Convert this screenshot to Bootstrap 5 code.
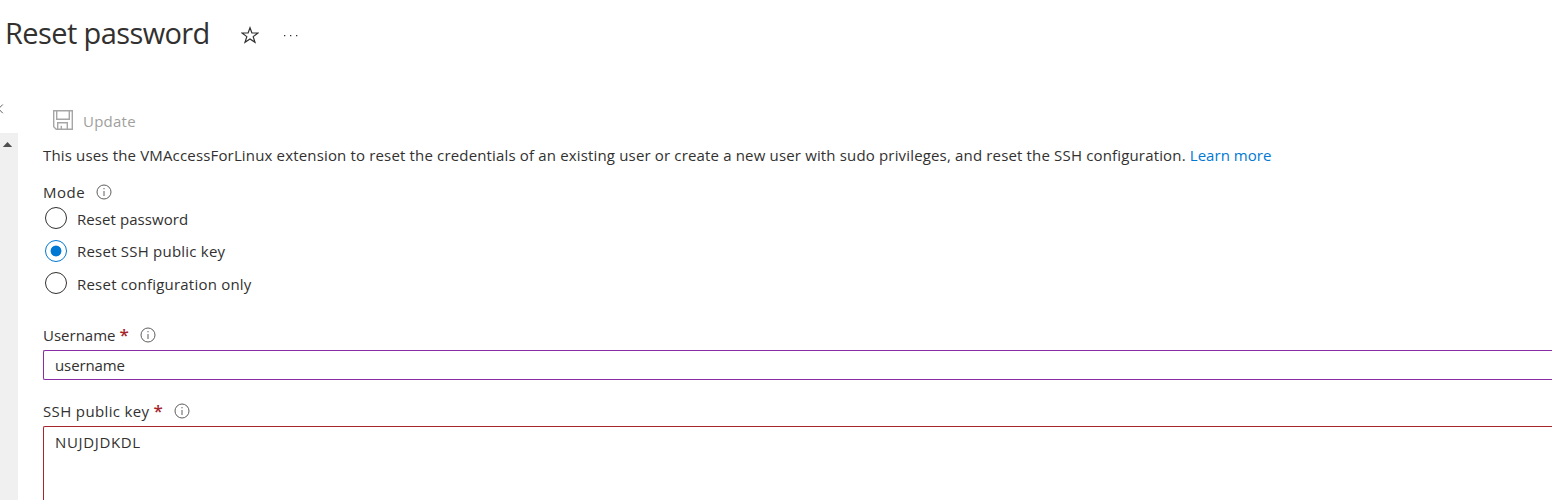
<!DOCTYPE html>
<html lang="en">
<head>
<meta charset="utf-8">
<title>Reset password</title>
<link href="https://cdn.jsdelivr.net/npm/bootstrap@5.3.0/dist/css/bootstrap.min.css" rel="stylesheet">
<style>
body{font-family:"Open Sans","Noto Sans",sans-serif;font-size:15px;line-height:20px;color:#323130;background:#fff;height:500px;overflow:hidden}
svg{display:block;flex:none}
.blade-head{height:102px;padding:13px 0 0 5px}
.blade-title{font-size:29px;line-height:40px;letter-spacing:-.6px;width:236px}
.blade-star{margin-top:13px}
.blade-more{margin:21px 0 0 24px}
.blade-body{height:398px}
.rail{width:18px}
.rail-toggle{height:31px}
.rail-track{background:#f0f0f0;padding:8px 0 0 2px}
.pane{padding-left:25px;min-width:0;height:398px;overflow:hidden}
.cmd{height:36px;color:#a19f9d;padding-left:10px;gap:10px;letter-spacing:.25px}
.cmd span{padding-top:2px}
.intro{height:20px;margin-top:7px;letter-spacing:.16px}
.intro a{color:#0078d4;letter-spacing:.03px}
.lbl{height:20px}
.mode-lbl{margin-top:17px;gap:11px;letter-spacing:.5px}
.user-lbl{margin-top:25px}
.key-lbl{letter-spacing:.36px}
.opt{height:32.5px;gap:10px}
.opt span{letter-spacing:.22px;padding-top:1px}
.opt:first-child span{letter-spacing:.07px}
.opt .form-check-input{width:22px;height:22px;margin:0 0 0 2px;border:1px solid #323130;box-shadow:none;flex:none}
.opt .form-check-input:checked{background:radial-gradient(circle,#0078d4 5px,#fff 5.8px);border-color:#0078d4}
.req{color:#a4262c;font-size:17px;font-weight:600;letter-spacing:0;margin-left:4px;margin-right:11px}
.field{border-radius:2px;padding:4px 11px;font-size:15px;line-height:20px;color:#323130;resize:none;box-shadow:none!important;border-right:0!important;border-top-right-radius:0;border-bottom-right-radius:0}
.field-user{border:1px solid #8a2da5;height:30px;margin:5px 0 21px;letter-spacing:-.1px}
.field-key{border:1px solid #a4262c;height:74px;margin-top:5px;padding-top:5px;letter-spacing:.65px;border-bottom:0;border-bottom-left-radius:0}
</style>
</head>
<body>
<header class="blade-head d-flex align-items-start">
  <h1 class="blade-title mb-0 fw-normal">Reset password</h1>
  <svg class="blade-star" width="18" height="18" viewBox="0 0 18 18" fill="none" stroke="#323130" stroke-width="1.2"><path d="M9 1.800 10.900 7H17L12.200 10.600 14 16.300 9 12.900 4 16.300 5.800 10.600 1 7H7.100Z"/></svg>
  <svg class="blade-more" width="16" height="4" viewBox="0 0 16 4" fill="#323130"><path d="M1 1h1.300v1.300H1zM7 1h1.300v1.300H7zM13 1h1.300v1.300H13z"/></svg>
</header>
<div class="blade-body d-flex">
  <aside class="rail d-flex flex-column flex-shrink-0">
    <div class="rail-toggle"><svg width="5" height="12" viewBox="0 0 5 12" fill="none" stroke="#605e5c"><path d="M2.800 2.500-1.500 6.800 2.800 11.200"/></svg></div>
    <div class="rail-track flex-grow-1"><svg width="11" height="7" viewBox="0 0 11 7"><path d="M.8 6 5.500 1 10.200 6Z" fill="#505050"/></svg></div>
  </aside>
  <main class="pane flex-grow-1">
    <div class="cmd d-flex align-items-center">
      <svg width="20" height="20" viewBox="0 0 20 20" fill="none" stroke="#a6a6a6" stroke-width="1.4"><path d="M.7.7H19.300V19.300H3.200L.7 16.800ZM3.700.7V9.300H16.300V.7M4.700 19.300V12.700H14.300V19.300M8.300 19.300V15.700"/></svg>
      <span>Update</span>
    </div>
    <p class="intro mb-0 text-nowrap">This uses the VMAccessForLinux extension to reset the credentials of an existing user or create a new user with sudo privileges, and reset the SSH configuration. <a href="#" class="text-decoration-none">Learn more</a></p>
    <div class="lbl mode-lbl d-flex align-items-center"><span>Mode</span>
      <svg width="16" height="16" viewBox="0 0 16 16" fill="none" stroke="#605e5c"><circle cx="8" cy="8" r="7"/><path d="M8 7V12M8 4V5.300"/></svg></div>
    <div>
      <label class="opt d-flex align-items-center"><input class="form-check-input" type="radio" name="mode"><span>Reset password</span></label>
      <label class="opt d-flex align-items-center"><input class="form-check-input" type="radio" name="mode" checked><span>Reset SSH public key</span></label>
      <label class="opt d-flex align-items-center"><input class="form-check-input" type="radio" name="mode"><span>Reset configuration only</span></label>
    </div>
    <div class="lbl user-lbl d-flex align-items-center"><span>Username</span><span class="req">*</span>
      <svg width="16" height="16" viewBox="0 0 16 16" fill="none" stroke="#605e5c"><circle cx="8" cy="8" r="7"/><path d="M8 7V12M8 4V5.300"/></svg></div>
    <input class="form-control field field-user" value="username" aria-label="Username">
    <div class="lbl key-lbl d-flex align-items-center"><span>SSH public key</span><span class="req">*</span>
      <svg width="16" height="16" viewBox="0 0 16 16" fill="none" stroke="#605e5c"><circle cx="8" cy="8" r="7"/><path d="M8 7V12M8 4V5.300"/></svg></div>
    <textarea class="form-control field field-key" aria-label="SSH public key">NUJDJDKDL</textarea>
  </main>
</div>
</body>
</html>
